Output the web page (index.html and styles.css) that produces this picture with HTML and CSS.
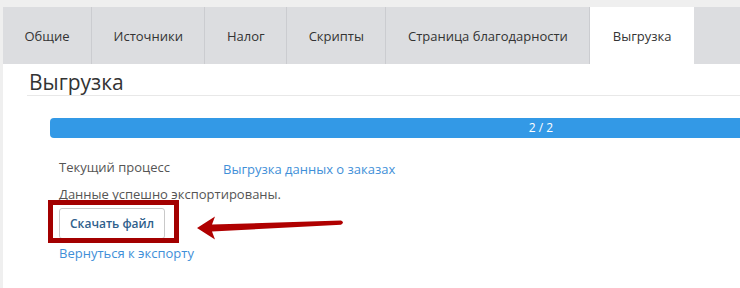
FILE: index.html
```html
<!DOCTYPE html>
<html lang="ru">
<head>
<meta charset="utf-8">
<title>Выгрузка</title>
<link rel="stylesheet" href="styles.css">
</head>
<body>
<div class="page">
  <nav class="tabs">
    <a class="tab">Общие</a>
    <a class="tab">Источники</a>
    <a class="tab">Налог</a>
    <a class="tab">Скрипты</a>
    <a class="tab">Страница благодарности</a>
    <a class="tab active">Выгрузка</a>
  </nav>
  <main class="content">
    <h1 class="title">Выгрузка</h1>
    <div class="panel">
      <div class="progress"><div class="progress-bar">2 / 2</div></div>
      <div class="info">
        <div class="row"><span class="label">Текущий процесс</span><a class="value link">Выгрузка данных о заказах</a></div>
        <p class="msg">Данные успешно экспортированы.</p>
        <button class="btn">Скачать файл</button>
        <a class="back link">Вернуться к экспорту</a>
      </div>
    </div>
  </main>
</div>
<div class="annot-box"></div>
<svg class="annot-arrow" width="740" height="288" viewBox="0 0 740 288">
  <path d="M197 228 L215 216.5 L212 224.5 L341 220.5 Q345 222.5 341 224.8 L212 231.5 L215 239.5 Z" fill="#b00000"/>
</svg>
</body>
</html>
```

FILE: styles.css
```css
html, body {
  margin: 0;
  overflow: hidden;
}
body {
  position: relative;
  height: 288px;
  background: #efefef;
  font-family: "Open Sans", "Noto Sans", sans-serif;
  color: #555;
}
.page {
  padding: 7px 0 0 3px;
}
.tabs {
  display: flex;
  height: 57px;
  background: #dcdde0;
}
.tab {
  display: flex;
  align-items: center;
  padding: 0 21.5px;
  font-size: 13px;
  color: #333;
  border-right: 1px solid #cbccd0;
}
.tab.active {
  background: #fff;
  border-right: none;
  padding: 0 22.5px;
}
.content {
  background: #fff;
  height: 224px;
  padding-left: 24px;
}
.title {
  margin: 0;
  padding: 5px 0 0 2px;
  font-size: 21px;
  font-weight: 400;
  line-height: 26px;
  color: #333;
  border-bottom: 1px solid #e8e8e8;
}
.panel {
  margin-left: 23px;
  padding-top: 22px;
  overflow: hidden;
}
.progress {
  width: 982px;
}
.progress-bar {
  height: 20px;
  line-height: 20px;
  border-radius: 4px 0 0 4px;
  background: #3399e6;
  color: #fff;
  font-size: 12px;
  text-align: center;
}
.info {
  padding-left: 9px;
  font-size: 13px;
  line-height: 20px;
}
.row {
  display: flex;
  margin-top: 19px;
}
.label {
  width: 164px;
}
.value {
  padding-top: 2px;
}
.link {
  color: #3f8fd8;
}
.msg {
  margin: 5px 0 0;
}
.btn {
  display: block;
  margin-top: 4px;
  height: 31px;
  padding: 0 10px;
  background: #fff;
  border: 1px solid #c9c9c9;
  border-radius: 3px;
  font-family: "Open Sans", sans-serif;
  font-size: 12px;
  font-weight: 600;
  color: #2f5f8c;
}
.back {
  display: block;
  margin-top: 4px;
}
.annot-box {
  position: absolute;
  left: 48px;
  top: 200px;
  width: 131px;
  height: 43px;
  box-sizing: border-box;
  border: 5px solid #a30000;
}
.annot-arrow {
  position: absolute;
  left: 0;
  top: 0;
}
```
